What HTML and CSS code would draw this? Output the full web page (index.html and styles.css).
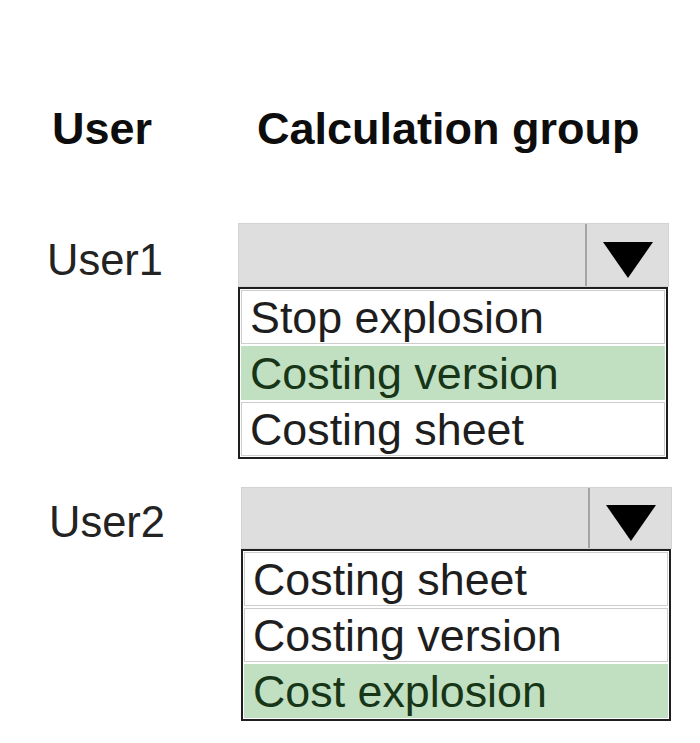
FILE: index.html
```html
<!DOCTYPE html>
<html>
<head>
<meta charset="utf-8">
<link rel="stylesheet" href="styles.css">
</head>
<body>
<div class="page">
  <div class="header">
    <div class="h-user">User</div>
    <div class="h-group">Calculation group</div>
  </div>

  <div class="row row1">
    <div class="label">User1</div>
    <div class="dropdown">
      <div class="select">
        <div class="select-field"></div>
        <div class="select-btn">
          <svg class="arrow" width="50" height="36" viewBox="0 0 50 36"><polygon points="0,0 50,0 25,36" fill="#000"/></svg>
        </div>
      </div>
      <div class="list">
        <div class="item">Stop explosion</div>
        <div class="item selected">Costing version</div>
        <div class="item">Costing sheet</div>
      </div>
    </div>
  </div>

  <div class="row row2">
    <div class="label">User2</div>
    <div class="dropdown shifted">
      <div class="select short">
        <div class="select-field"></div>
        <div class="select-btn">
          <svg class="arrow" width="50" height="36" viewBox="0 0 50 36"><polygon points="0,0 50,0 25,36" fill="#000"/></svg>
        </div>
      </div>
      <div class="list">
        <div class="item">Costing sheet</div>
        <div class="item">Costing version</div>
        <div class="item selected">Cost explosion</div>
      </div>
    </div>
  </div>
</div>
</body>
</html>
```

FILE: styles.css
```css
html, body {
  margin: 0;
  padding: 0;
  background: #fff;
}

body {
  font-family: "Liberation Sans", Arial, sans-serif;
  color: #1e1e1e;
}

.page {
  padding-top: 103px;
  padding-left: 47px;
}

.header {
  display: flex;
  font-weight: bold;
  font-size: 45px;
  line-height: 52px;
  color: #0d0d0d;
}

.h-user {
  width: 205px;
  padding-left: 5px;
}

.row {
  display: flex;
}

.row1 {
  margin-top: 68px;
}

.row2 {
  margin-top: 28px;
}

.label {
  width: 191px;
  font-size: 43.5px;
  line-height: 52px;
  padding-top: 11px;
  color: #232323;
}

.row2 .label {
  padding-top: 9px;
  padding-left: 2px;
  width: 189px;
}

.dropdown {
  width: 431px;
  display: flex;
  flex-direction: column;
}

.dropdown.shifted {
  margin-left: 3px;
}

.select {
  display: flex;
  height: 64px;
  box-sizing: border-box;
  background: #dedede;
  border: 1px solid #d3d3d3;
}

.select.short {
  height: 62px;
}

.select-field {
  flex: 1;
}

.select-btn {
  width: 83px;
  border-left: 2px solid #a4a4a4;
  display: flex;
  align-items: center;
  justify-content: center;
  padding-top: 10px;
  box-sizing: border-box;
}

.list {
  border: 2px solid #1f1f1f;
  padding: 1px;
  display: flex;
  flex-direction: column;
  gap: 2px;
  margin-right: 1px;
}

.item {
  height: 52px;
  border: 1px solid #cdcdcd;
  font-size: 44.8px;
  line-height: 52px;
  padding-left: 8px;
  color: #1e1e1e;
  white-space: nowrap;
}

.item.selected {
  background: #c1e0c1;
  border-color: #c1e0c1;
  color: #173517;
}
```
